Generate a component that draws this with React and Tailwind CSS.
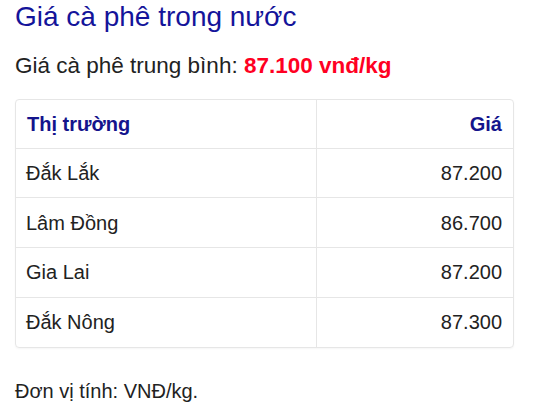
import React from "react";

const rows = [
  ["Đắk Lắk", "87.200"],
  ["Lâm Đồng", "86.700"],
  ["Gia Lai", "87.200"],
  ["Đắk Nông", "87.300"],
];

export default function App() {
  return (
    <div className="bg-white w-[551px] h-[403px] overflow-hidden pl-[15px] pr-[37px] text-[#222]" style={{ fontFamily: '"Liberation Sans", Arial, sans-serif' }}>
      <h1 className="text-[28px] leading-[32px] pt-[1px] text-[#14149a] font-normal">Giá cà phê trong nước</h1>
      <p className="mt-[19px] text-[22.5px] leading-[28px] text-[#222]">
        Giá cà phê trung bình: <span className="font-bold text-[#ff0022]">87.100 vnđ/kg</span>
      </p>
      <div className="mt-[19px] border border-[#e6e6e6] rounded-[4px] overflow-hidden shadow-[0_1px_2px_rgba(0,0,0,0.04)]">
        <table className="w-full border-collapse text-[20px]">
          <thead>
            <tr className="h-[48px]">
              <th className="text-left font-bold text-[20px] text-[#14148c] pl-[11px] border-r border-[#e6e6e6] w-[300px]">Thị trường</th>
              <th className="text-right font-bold text-[20px] text-[#14148c] pr-[11px]">Giá</th>
            </tr>
          </thead>
          <tbody>
            {rows.map(([n, p]) => (
              <tr key={n} className="h-[49.75px] border-t border-[#e6e6e6]">
                <td className="pl-[10px] border-r border-[#e6e6e6]">{n}</td>
                <td className="text-right pr-[11px]">{p}</td>
              </tr>
            ))}
          </tbody>
        </table>
      </div>
      <p className="mt-[30px] text-[20px] leading-[26px]">Đơn vị tính: VNĐ/kg.</p>
    </div>
  );
}
